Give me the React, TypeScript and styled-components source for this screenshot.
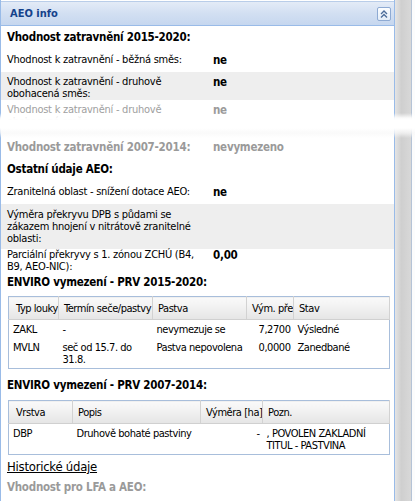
import { FC, ReactNode } from "react";
import styled, { createGlobalStyle } from "styled-components";

const GlobalStyle = createGlobalStyle`
  html, body {
    margin: 0;
    padding: 0;
    background: #ffffff;
  }
  body {
    font-family: "DejaVu Sans Condensed", "DejaVu Sans", sans-serif;
    font-size: 11px;
    letter-spacing: -0.25px;
    color: #000;
  }
  * {
    box-sizing: border-box;
  }
`;

const Frame = styled.div`
  position: relative;
  display: flex;
  width: 415px;
  height: 501px;
  overflow: hidden;
  background: #fcfcfc;
`;

const Panel = styled.div`
  width: 395px;
  flex: none;
  border-left: 1px solid #99bbe8;
  border-right: 1px solid #99bbe8;
  background: #fff;
  display: flex;
  flex-direction: column;
`;

const ScrollTrack = styled.div`
  width: 17px;
  flex: none;
  background: linear-gradient(to right, #e4e4e4, #cfcfcf 40%, #d8d8d8);
  border-right: 1px solid #b5c3d6;
`;

const Header = styled.div`
  height: 25px;
  margin-top: 1px;
  display: flex;
  align-items: center;
  justify-content: space-between;
  padding: 0 3px 0 9px;
  background: linear-gradient(to bottom, #e3ebf7, #d2dff2 50%, #c6d7ef);
  border-top: 1px solid #b9cde9;
  border-bottom: 1px solid #99bbe8;
`;

const Title = styled.span`
  font-weight: bold;
  color: #15428b;
  letter-spacing: 0;
`;

const ToolButton = styled.button`
  width: 14px;
  height: 14px;
  padding: 0;
  display: flex;
  align-items: center;
  justify-content: center;
  background: linear-gradient(to bottom, #fbfdff, #e4edf8);
  border: 1px solid #8eaad3;
  border-radius: 2px;
`;

const Body = styled.div`
  padding: 0 4px 0 6px;
  display: flex;
  flex-direction: column;
`;

const Heading = styled.div<{ $faded?: boolean; $pad?: string }>`
  font-weight: bold;
  font-size: 11.5px;
  line-height: 14px;
  padding: ${(p) => p.$pad ?? "4px 0 4px"};
  color: ${(p) => (p.$faded ? "#9a9a9a" : "#000")};
`;

const Row = styled.div<{ $shaded?: boolean; $faded?: boolean; $pad?: string }>`
  display: grid;
  grid-template-columns: 206px 1fr;
  line-height: 12px;
  margin: 0 -4px 0 -6px;
  padding: ${(p) => p.$pad ?? "6px 0 5px"};
  padding-left: 6px;
  background: ${(p) => (p.$shaded ? "#eeeeee" : "transparent")};
  color: ${(p) => (p.$faded ? "#a0a0a0" : "#000")};
`;

const Value = styled.span<{ $faded?: boolean }>`
  font-weight: bold;
  font-size: 11.5px;
  color: ${(p) => (p.$faded ? "#9a9a9a" : "#000")};
`;

const Clip = styled.div`
  height: 36px;
  overflow: hidden;
`;

const TearBand = styled.div`
  position: absolute;
  left: 0;
  right: 0;
  top: 113px;
  height: 25px;
  background: linear-gradient(
    to bottom,
    rgba(255, 255, 255, 0) 0%,
    rgba(255, 255, 255, 0.9) 20%,
    #ffffff 28%,
    #ffffff 60%,
    rgba(248, 248, 248, 0.75) 80%,
    rgba(255, 255, 255, 0) 100%
  );
`;

const Table = styled.table<{ $top: number }>`
  width: 382px;
  margin: ${(p) => p.$top}px 0 0 1px;
  border: 1px solid #a8bedb;
  border-collapse: collapse;
  table-layout: fixed;
  letter-spacing: -0.45px;
`;

const Th = styled.th<{ $first?: boolean }>`
  height: 23px;
  padding: 0 0 0 ${(p) => (p.$first ? 7 : 5)}px;
  text-align: left;
  font-weight: normal;
  white-space: nowrap;
  overflow: hidden;
  background: linear-gradient(to bottom, #fafafa, #efefef 55%, #e5e5e5);
  border-right: 1px solid #d2d2d2;
  border-bottom: 1px solid #d0d0d0;
`;

const Td = styled.td<{ $right?: boolean }>`
  padding: 4px ${(p) => (p.$right ? 3 : 0)}px 2px 4px;
  vertical-align: top;
  line-height: 12px;
  text-align: ${(p) => (p.$right ? "right" : "left")};
`;

const HistoryLink = styled.a`
  display: block;
  font-size: 13px;
  line-height: 16px;
  margin-top: 4px;
  color: #000;
  text-decoration: underline;
`;

const ChevronsUp: FC = () => (
  <svg width="10" height="10" viewBox="0 0 10 10">
    <path d="M2 5 L5 2 L8 5" fill="none" stroke="#4d6d9a" strokeWidth="1.4" />
    <path d="M2 8.5 L5 5.5 L8 8.5" fill="none" stroke="#4d6d9a" strokeWidth="1.4" />
  </svg>
);

interface IFieldProps {
  label: ReactNode;
  value?: string;
  shaded?: boolean;
  faded?: boolean;
  pad?: string;
}

const Field: FC<IFieldProps> = ({ label, value, shaded, faded, pad }) => (
  <Row $shaded={shaded} $faded={faded} $pad={pad}>
    <span>{label}</span>
    <span>{value && <Value $faded={faded}>{value}</Value>}</span>
  </Row>
);

export default function App() {
  return (
    <>
      <GlobalStyle />
      <Frame>
        <Panel>
          <Header>
            <Title>AEO info</Title>
            <ToolButton>
              <ChevronsUp />
            </ToolButton>
          </Header>
          <Body>
            <Heading $pad="4px 0 4px">Vhodnost zatravnění 2015-2020:</Heading>
            <Field label="Vhodnost k zatravnění - běžná směs:" value="ne" />
            <Field
              shaded
              pad="4px 0 0"
              label={
                <>
                  Vhodnost k zatravnění - druhově
                  <br />
                  obohacená směs:
                </>
              }
              value="ne"
            />
            <Clip>
              <Field
                faded
                pad="4px 0 0"
                label={
                  <>
                    Vhodnost k zatravnění - druhově
                    <br />
                    obohacená směs:
                  </>
                }
                value="ne"
              />
            </Clip>

            <Row $faded $pad="5px 0 5px">
              <Value $faded>Vhodnost zatravnění 2007-2014:</Value>
              <Value $faded>nevymezeno</Value>
            </Row>
            <Heading $pad="4px 0 4px">Ostatní údaje AEO:</Heading>
            <Field label="Zranitelná oblast - snížení dotace AEO:" value="ne" />
            <Field
              shaded
              pad="5px 0 4px"
              label={
                <>
                  Výměra překryvu DPB s půdami se
                  <br />
                  zákazem hnojení v nitrátově zranitelné
                  <br />
                  oblasti:
                </>
              }
            />
            <Field
              pad="0 0 0"
              label={
                <>
                  Parciální překryvy s 1. zónou ZCHÚ (B4,
                  <br />
                  B9, AEO-NIC):
                </>
              }
              value="0,00"
            />
            <Heading $pad="2px 0 2px">ENVIRO vymezení - PRV 2015-2020:</Heading>
            <Table $top={5}>
              <colgroup>
                <col style={{ width: 50 }} />
                <col style={{ width: 94 }} />
                <col style={{ width: 94 }} />
                <col style={{ width: 47 }} />
                <col />
              </colgroup>
              <thead>
                <tr>
                  <Th $first>Typ louky</Th>
                  <Th>Termín seče/pastvy</Th>
                  <Th>Pastva</Th>
                  <Th>Vým. překryvu</Th>
                  <Th>Stav</Th>
                </tr>
              </thead>
              <tbody>
                <tr>
                  <Td>ZAKL</Td>
                  <Td>-</Td>
                  <Td>nevymezuje se</Td>
                  <Td $right>7,2700</Td>
                  <Td>Výsledné</Td>
                </tr>
                <tr>
                  <Td>MVLN</Td>
                  <Td>seč od 15.7. do 31.8.</Td>
                  <Td>Pastva nepovolena</Td>
                  <Td $right>0,0000</Td>
                  <Td>Zanedbané</Td>
                </tr>
              </tbody>
            </Table>
            <Heading $pad="9px 0 3px">ENVIRO vymezení - PRV 2007-2014:</Heading>
            <Table $top={5}>
              <colgroup>
                <col style={{ width: 64 }} />
                <col style={{ width: 128 }} />
                <col style={{ width: 62 }} />
                <col />
              </colgroup>
              <thead>
                <tr>
                  <Th $first>Vrstva</Th>
                  <Th>Popis</Th>
                  <Th>Výměra [ha]</Th>
                  <Th>Pozn.</Th>
                </tr>
              </thead>
              <tbody>
                <tr>
                  <Td>DBP</Td>
                  <Td>Druhově bohaté pastviny</Td>
                  <Td $right>-</Td>
                  <Td>, POVOLEN ZAKLADNÍ TITUL - PASTVINA</Td>
                </tr>
              </tbody>
            </Table>
            <HistoryLink>Historické údaje</HistoryLink>
            <Heading $faded $pad="5px 0 3px">Vhodnost pro LFA a AEO:</Heading>
          </Body>
        </Panel>
        <ScrollTrack />
        <TearBand />
      </Frame>
    </>
  );
}
